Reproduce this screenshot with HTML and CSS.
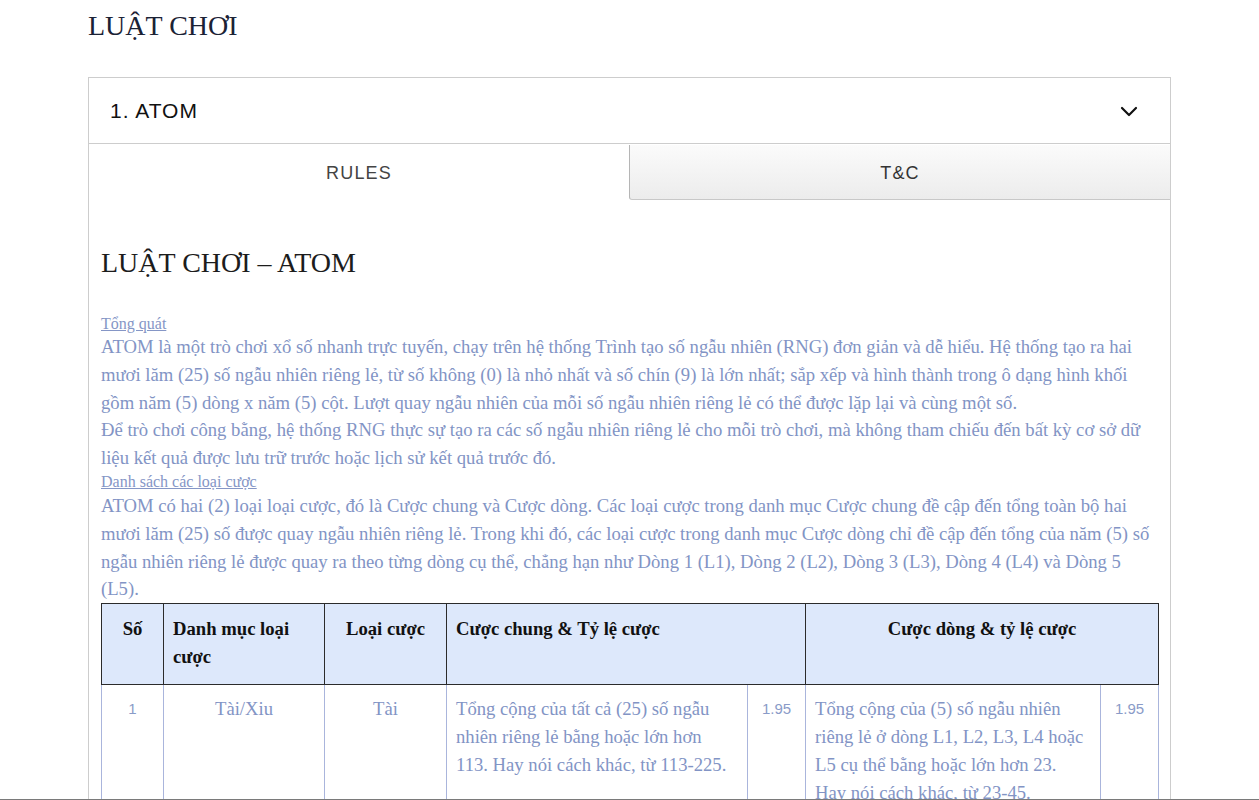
FILE: index.html
```html
<!DOCTYPE html>
<html lang="vi">
<head>
<meta charset="utf-8">
<title>Luật chơi</title>
<link rel="stylesheet" href="styles.css">
</head>
<body>
<div class="page">
  <h1 class="page-title">LUẬT CHƠI</h1>
  <section class="accordion">
    <div class="acc-header">
      <span class="acc-title">1. ATOM</span>
      <svg class="chevron" width="18" height="11" viewBox="0 0 18 11"><path d="M2 2 L9 9 L16 2" fill="none" stroke="#111" stroke-width="2.2" stroke-linecap="round" stroke-linejoin="round"/></svg>
    </div>
    <div class="tabs">
      <div class="tab tab-active">RULES</div>
      <div class="tab tab-inactive">T&amp;C</div>
    </div>
    <div class="content">
      <h2 class="content-title">LUẬT CHƠI – ATOM</h2>
      <div class="sub sub-first"><a class="sublink">Tổng quát</a></div>
      <p class="para">ATOM là một trò chơi xổ số nhanh trực tuyến, chạy trên hệ thống Trình tạo số ngẫu nhiên (RNG) đơn giản và dễ hiểu. Hệ thống tạo ra hai mươi lăm (25) số ngẫu nhiên riêng lẻ, từ số không (0) là nhỏ nhất và số chín (9) là lớn nhất; sắp xếp và hình thành trong ô dạng hình khối gồm năm (5) dòng x năm (5) cột. Lượt quay ngẫu nhiên của mỗi số ngẫu nhiên riêng lẻ có thể được lặp lại và cùng một số.<br>Để trò chơi công bằng, hệ thống RNG thực sự tạo ra các số ngẫu nhiên riêng lẻ cho mỗi trò chơi, mà không tham chiếu đến bất kỳ cơ sở dữ liệu kết quả được lưu trữ trước hoặc lịch sử kết quả trước đó.</p>
      <div class="sub"><a class="sublink">Danh sách các loại cược</a></div>
      <p class="para">ATOM có hai (2) loại loại cược, đó là Cược chung và Cược dòng. Các loại cược trong danh mục Cược chung đề cập đến tổng toàn bộ hai mươi lăm (25) số được quay ngẫu nhiên riêng lẻ. Trong khi đó, các loại cược trong danh mục Cược dòng chỉ đề cập đến tổng của năm (5) số ngẫu nhiên riêng lẻ được quay ra theo từng dòng cụ thể, chẳng hạn như Dòng 1 (L1), Dòng 2 (L2), Dòng 3 (L3), Dòng 4 (L4) và Dòng 5 (L5).</p>
      <table class="bets">
        <colgroup>
          <col class="c-no"><col class="c-cat"><col class="c-type"><col class="c-gen"><col class="c-odd"><col class="c-line"><col class="c-odd">
        </colgroup>
        <thead>
          <tr>
            <th class="center">Số</th>
            <th>Danh mục loại cược</th>
            <th class="center">Loại cược</th>
            <th colspan="2">Cược chung &amp; Tỷ lệ cược</th>
            <th colspan="2" class="center">Cược dòng &amp; tỷ lệ cược</th>
          </tr>
        </thead>
        <tbody>
          <tr>
            <td class="num">1</td>
            <td class="center">Tài/Xiu</td>
            <td class="center">Tài</td>
            <td>Tổng cộng của tất cả (25) số ngẫu nhiên riêng lẻ bằng hoặc lớn hơn 113. Hay nói cách khác, từ 113-225.</td>
            <td class="num">1.95</td>
            <td>Tổng cộng của (5) số ngẫu nhiên riêng lẻ ở dòng L1, L2, L3, L4 hoặc L5 cụ thể bằng hoặc lớn hơn 23. Hay nói cách khác, từ 23-45.</td>
            <td class="num">1.95</td>
          </tr>
          <tr>
            <td class="num">2</td>
            <td class="center">Tài/Xiu</td>
            <td class="center">Xỉu</td>
            <td>Tổng cộng của tất cả (25) số ngẫu nhiên riêng lẻ bằng hoặc nhỏ hơn 112. Hay nói cách khác, từ 0-112.</td>
            <td class="num">1.95</td>
            <td>Tổng cộng của (5) số ngẫu nhiên riêng lẻ ở dòng L1, L2, L3, L4 hoặc L5 cụ thể bằng hoặc nhỏ hơn 22. Hay nói cách khác, từ 0-22.</td>
            <td class="num">1.95</td>
          </tr>
        </tbody>
      </table>
    </div>
  </section>
</div>
<div class="bottom-rule"></div>
</body>
</html>
```
FILE: styles.css
```css
html, body {
  margin: 0;
  padding: 0;
  background: #ffffff;
}
body {
  font-family: "Liberation Serif", "Times New Roman", serif;
}
.page {
  padding: 0 88px 40px 88px;
}
.page-title {
  margin: 0 0 33px 0;
  padding-top: 8px;
  font-size: 28px;
  line-height: 36px;
  font-weight: normal;
  color: #1b2235;
}
.accordion {
  border: 1px solid #cdcdcd;
  background: #fff;
}
.acc-header {
  height: 65px;
  display: flex;
  align-items: center;
  justify-content: space-between;
  padding: 0 32px 0 21px;
  border-bottom: 1px solid #cdcdcd;
}
.acc-title {
  font-family: "Liberation Sans", Arial, sans-serif;
  font-size: 21px;
  letter-spacing: 1px;
  color: #111;
}
.chevron {
  display: block;
  margin-top: 1px;
}
.tabs {
  display: flex;
  height: 56px;
}
.tab {
  flex: 1;
  display: flex;
  align-items: center;
  justify-content: center;
  padding-top: 2px;
  font-family: "Liberation Sans", Arial, sans-serif;
  font-size: 18px;
  letter-spacing: 1.2px;
  color: #444;
}
.tab-active {
  background: #fff;
}
.tab-inactive {
  margin-top: 1px;
  background: linear-gradient(#fbfbfb, #ececec);
  border-left: 1px solid #b5b5b5;
  border-bottom: 1px solid #c8c8c8;
  border-bottom-left-radius: 3px;
  color: #333;
}
.content {
  padding: 45px 12px 0 12px;
}
.content-title {
  margin: 0 0 33px 0;
  font-size: 28px;
  line-height: 36px;
  font-weight: normal;
  color: #1c1c1c;
}
.sub {
  font-size: 16px;
  line-height: 20px;
}
.sub-first {
  line-height: 19px;
}
.sublink {
  color: #8596c6;
  text-decoration: underline;
}
.para {
  margin: 0;
  font-size: 18.667px;
  line-height: 27.8px;
  color: #8294c5;
}
.bets {
  width: 100%;
  border-collapse: collapse;
  table-layout: fixed;
  font-size: 18.667px;
  line-height: 28px;
}
.c-no { width: 62px; }
.c-cat { width: 161px; }
.c-type { width: 122px; }
.c-gen { width: 301px; }
.c-odd { width: 58px; }
.c-line { width: 295px; }
.bets th {
  background: #dde8fb;
  border: 1px solid #2b2b2b;
  color: #111;
  font-weight: bold;
  text-align: left;
  vertical-align: top;
  padding: 11px 9px 13px 9px;
}
.bets td {
  border: 1px solid #aab5dc;
  color: #8294c5;
  vertical-align: top;
  text-align: left;
  padding: 10px 9px 12px 9px;
}
.bets .center {
  text-align: center;
}
.bets td.num {
  text-align: center;
  font-family: "Liberation Sans", Arial, sans-serif;
  font-size: 15px;
  color: #8a9bc8;
}
.bottom-rule {
  position: fixed;
  left: 0;
  right: 0;
  bottom: 0;
  height: 1px;
  background: #7a7a7a;
}
```
